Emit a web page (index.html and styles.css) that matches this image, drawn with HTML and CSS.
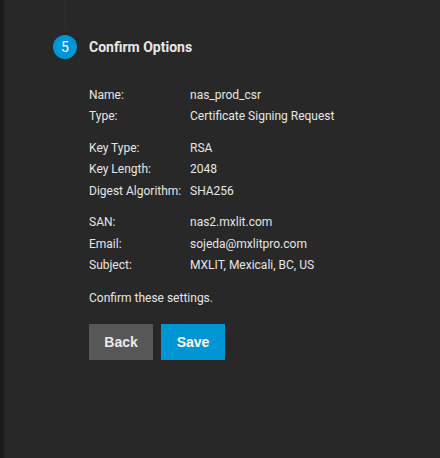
FILE: index.html
```html
<!DOCTYPE html>
<html>
<head>
<meta charset="utf-8">
<link rel="stylesheet" href="styles.css">
</head>
<body>
<div class="app">
  <div class="rail"></div>
  <main class="panel">
    <div class="connector"></div>
    <div class="step-head">
      <span class="step-num">5</span>
      <h2 class="step-title">Confirm Options</h2>
    </div>
    <div class="step-body">
      <div class="group">
        <div class="row"><span class="label">Name:</span><span class="value">nas_prod_csr</span></div>
        <div class="row"><span class="label">Type:</span><span class="value">Certificate Signing Request</span></div>
      </div>
      <div class="group">
        <div class="row"><span class="label">Key Type:</span><span class="value">RSA</span></div>
        <div class="row"><span class="label">Key Length:</span><span class="value">2048</span></div>
        <div class="row"><span class="label">Digest Algorithm:</span><span class="value">SHA256</span></div>
      </div>
      <div class="group">
        <div class="row"><span class="label">SAN:</span><span class="value">nas2.mxlit.com</span></div>
        <div class="row"><span class="label">Email:</span><span class="value">sojeda@mxlitpro.com</span></div>
        <div class="row"><span class="label">Subject:</span><span class="value">MXLIT, Mexicali, BC, US</span></div>
      </div>
      <p class="confirm">Confirm these settings.</p>
      <div class="actions">
        <button class="btn btn-back">Back</button>
        <button class="btn btn-save">Save</button>
      </div>
    </div>
  </main>
</div>
</body>
</html>
```
FILE: styles.css
```css
html, body {
  margin: 0;
  padding: 0;
  height: 100%;
  background: #282828;
}
body {
  font-family: Roboto, "Liberation Sans", sans-serif;
  color: #e6e6e6;
}
.app {
  display: flex;
  height: 458px;
}
.rail {
  width: 4px;
  background: #1b1b1b;
  flex: none;
}
.panel {
  flex: 1;
  padding-left: 49px;
}
.connector {
  width: 1px;
  height: 29px;
  margin-left: 12px;
  background: #303030;
}
.step-head {
  display: flex;
  align-items: center;
  height: 36px;
}
.step-num {
  width: 24px;
  height: 24px;
  border-radius: 50%;
  background: #0095d5;
  color: #fff;
  font-size: 14px;
  display: flex;
  align-items: center;
  justify-content: center;
  flex: none;
}
.step-title {
  margin: 0 0 0 12px;
  font-size: 14px;
  font-weight: 700;
  color: #e8e8e8;
}
.step-body {
  padding-left: 36px;
  padding-top: 19px;
  font-size: 12px;
}
.group {
  margin-bottom: 10px;
}
.row {
  display: flex;
  height: 21.5px;
  align-items: center;
}
.label {
  width: 101px;
  flex: none;
}
.confirm {
  margin: 14px 0 0;
  line-height: 16px;
}
.actions {
  display: flex;
  gap: 8px;
  margin-top: 18px;
}
.btn {
  width: 64px;
  height: 36px;
  border: none;
  font-family: "Liberation Sans", Arial, sans-serif;
  font-size: 14px;
  font-weight: 700;
  color: #fff;
  padding: 0;
}
.btn-back {
  background: #575757;
  color: #eaeaea;
}
.btn-save {
  background: #0095d5;
}
```
